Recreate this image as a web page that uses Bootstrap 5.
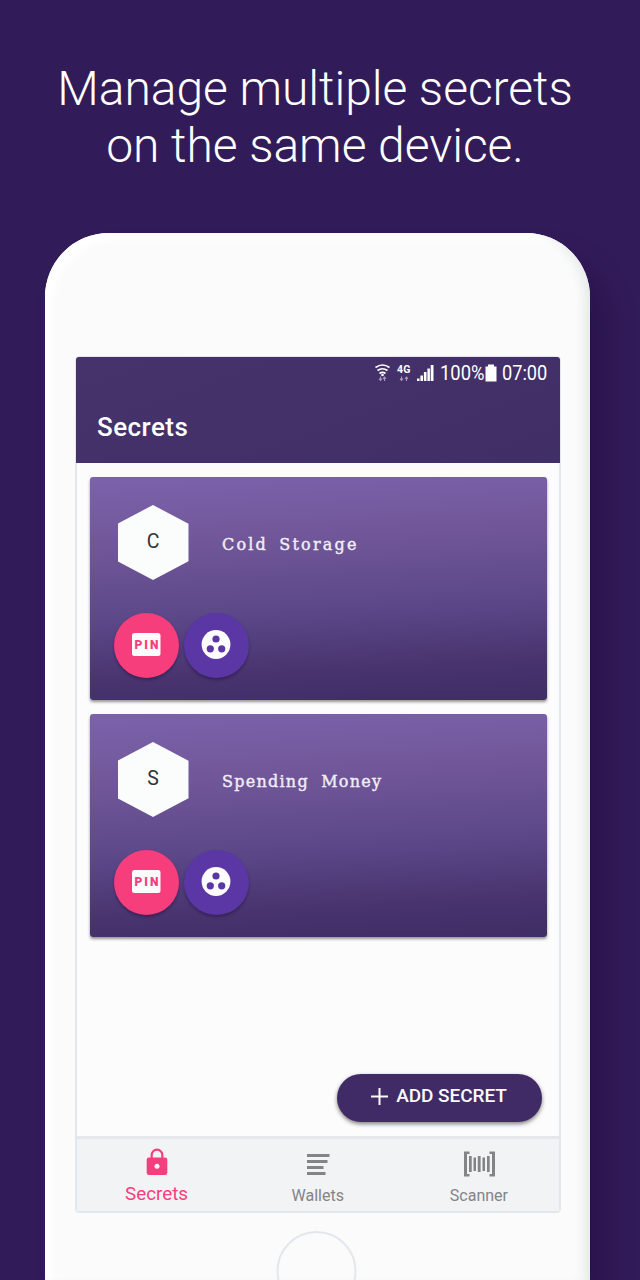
<!DOCTYPE html>
<html lang="en">
<head>
<meta charset="utf-8">
<meta name="viewport" content="width=device-width, initial-scale=1">
<title>Secrets</title>
<link href="https://cdn.jsdelivr.net/npm/bootstrap@5.3.0/dist/css/bootstrap.min.css" rel="stylesheet">
<style>
  body { background: #321b59; font-family: Roboto, "Noto Sans", sans-serif; height: 1280px; overflow: hidden; }
  .promo { height: 233px; padding: 60px 10px 0 0; font-size: 48px; font-weight: 300; line-height: 57px; letter-spacing: -.05px; }
  .phone { width: 545.5px; height: 1047px; overflow: hidden; margin-left: 44.5px; padding: 123px 29.5px 0 30.5px; border-radius: 64px 64px 0 0;
    background: #fbfbfb; box-shadow: inset -12px 0 12px -7px #e3e8e9, inset 8px 7px 10px #fff, 18px 24px 28px rgba(25,8,50,.3); }
  .screen { height: 857px; border: 1px solid #e2e7eb; border-radius: 4px; background: #fcfcfc; overflow: hidden; box-shadow: inset 0 0 0 1px #e2e7eb; }
  .app-header { height: 106px; background: linear-gradient(160deg, #47336b, #402e67); }
  .status-line { height: 31px; padding: 0 13px 0 0; font-size: 20px; line-height: 30px; }
  .status-line .pct { transform: scaleX(.92); transform-origin: left; width: 45px; margin-left: 4px; }
  .status-line .clock { transform: scaleX(.91); transform-origin: left; width: 45px; margin-left: 5px; }
  .app-title { font-size: 26px; font-weight: 500; line-height: 32px; letter-spacing: .45px; padding: 23px 0 0 21px; }
  .content { padding: 14px 13px 0 13.5px; height: 673px; }
  .secret { height: 223px; margin-bottom: 14px; border: 0; border-radius: 3px; padding: 28px 24px 0;
    background: linear-gradient(177deg, #7b61aa 2%, #715799 28%, #5b4787 60%, #48336e 84%, #402e66 98%);
    box-shadow: 0 2px 3px rgba(0,0,0,.42); }
  .hexagon { width: 71px; height: 75px; margin-left: 4px; padding-bottom: 1px; background: #fbfcfc; color: #333; font-size: 19.5px;
    clip-path: polygon(50% 0, 100% 25%, 100% 75%, 50% 100%, 0 75%, 0 25%); }
  .secret-name { font-family: "DejaVu Serif", serif; font-size: 16px; letter-spacing: 2.2px; word-spacing: 4px; color: #f2eef7;
    -webkit-text-stroke: .4px #f2eef7; margin: 4px 0 0 33.5px; }
  .secret-name.long { letter-spacing: 1.25px; word-spacing: 6px; }
  .discs { gap: 5px; margin-bottom: 22px; }
  .disc { width: 65px; height: 65px; box-shadow: 0 2px 3px rgba(25,10,50,.4); }
  .disc svg { margin-top: -1px; }
  .disc-pin { background: #f63e7d; }
  .disc-group { background: #5b36a5; }
  .add-secret { width: 205px; height: 48px; margin: -62px 18px 14px auto; border: 0; background: #402b66; color: #fafafa;
    font-size: 19px; font-weight: 500; letter-spacing: -.05px; box-shadow: 0 2px 4px rgba(0,0,0,.5); }
  .tabs { height: 76px; border-top: 2px solid #e5e7e9; background: #f2f3f5; color: #838485; font-size: 16px; box-shadow: inset 0 0 0 1px #e2e7eb; }
  .tabs a { color: inherit; line-height: 20px; }
  .tabs svg { margin: 9px 0 11px; }
  .tabs .chosen { color: #f63e7d; font-size: 18.8px; }
  .tabs .chosen svg { margin-bottom: 9px; }
  .home { width: 80px; height: 80px; margin: 18px auto 0; border: 2px solid #e3e7ec; transform: translateX(-1.5px); }
</style>
</head>
<body>
<h1 class="promo text-white text-center m-0">Manage multiple secrets<br>on the same device.</h1>
<main class="phone">
  <div class="screen d-flex flex-column">
    <header class="app-header text-white flex-shrink-0">
      <div class="status-line d-flex justify-content-end align-items-center">
        <svg width="66" height="24" viewBox="1.500 0 66 24" fill="none" aria-hidden="true">
          <g stroke="#fff" stroke-width="1.7">
            <path d="M7 6.500q7-5 14 0M9 9.500q5-3.500 10 0M11 12.500q3-2.200 6 0"/>
          </g>
          <circle cx="14" cy="14" r="1.300" fill="#fff"/>
          <g stroke="#a79bbd" stroke-width="1.1">
            <path d="M12 15.500v4M10.500 17.700l1.500 1.800 1.500-1.800M16 20v-4M14.500 17.800l1.500-1.800 1.500 1.800M33 15.500v4M31.500 17.700l1.500 1.800 1.500-1.800M38 20v-4M36.500 17.800l1.500-1.800 1.500 1.800"/>
          </g>
          <text x="28.500" y="12" font-size="10.500" font-weight="700" fill="#fff" textLength="13.500">4G</text>
          <path fill="#fff" d="M48.500 17.500H51V20h-2.500zM51.900 14.500h2.600V20h-2.600zM55.400 11H58v9h-2.600zM58.900 7.500h2.500V20h-2.500zM62.200 4H65v16h-2.800z"/>
        </svg>
        <span class="pct">100%</span>
        <svg width="12" height="18" viewBox="0 0 12 18" fill="#fff" aria-hidden="true"><path d="M3 .500h6v2h2.500v15H.500v-15H3z"/></svg>
        <span class="clock">07:00</span>
      </div>
      <div class="app-title">Secrets</div>
    </header>

    <section class="content flex-shrink-0">
      <article class="secret card">
        <div class="d-flex align-items-center">
          <div class="hexagon d-flex align-items-center justify-content-center">C</div>
          <div class="secret-name">Cold Storage</div>
        </div>
        <div class="discs d-flex mt-auto">
          <div class="disc disc-pin rounded-circle d-flex align-items-center justify-content-center">
            <svg width="30" height="24" viewBox="0 0 30 24"><rect x="1" width="28.500" height="23" rx="2.500" fill="#fcfafb"/><text x="3.400" y="15.600" font-size="12" font-weight="900" textLength="24" fill="#f63e7d">PIN</text></svg>
          </div>
          <div class="disc disc-group rounded-circle d-flex align-items-center justify-content-center">
            <svg width="30" height="30" viewBox="0 0 30 30"><circle cx="15" cy="14.500" r="14.400" fill="#fcfbfd"/><g fill="#5b36a5"><circle cx="15" cy="9" r="3.600"/><circle cx="9.300" cy="18.800" r="3.600"/><circle cx="20.700" cy="18.800" r="3.600"/></g></svg>
          </div>
        </div>
      </article>
      <article class="secret card">
        <div class="d-flex align-items-center">
          <div class="hexagon d-flex align-items-center justify-content-center">S</div>
          <div class="secret-name long">Spending Money</div>
        </div>
        <div class="discs d-flex mt-auto">
          <div class="disc disc-pin rounded-circle d-flex align-items-center justify-content-center">
            <svg width="30" height="24" viewBox="0 0 30 24"><rect x="1" width="28.500" height="23" rx="2.500" fill="#fcfafb"/><text x="3.400" y="15.600" font-size="12" font-weight="900" textLength="24" fill="#f63e7d">PIN</text></svg>
          </div>
          <div class="disc disc-group rounded-circle d-flex align-items-center justify-content-center">
            <svg width="30" height="30" viewBox="0 0 30 30"><circle cx="15" cy="14.500" r="14.400" fill="#fcfbfd"/><g fill="#5b36a5"><circle cx="15" cy="9" r="3.600"/><circle cx="9.300" cy="18.800" r="3.600"/><circle cx="20.700" cy="18.800" r="3.600"/></g></svg>
          </div>
        </div>
      </article>
    </section>

    <button class="add-secret btn rounded-pill d-flex align-items-center justify-content-center flex-shrink-0 p-0 pb-1">
      <svg class="me-2" width="17" height="17" viewBox="0 0 17 17" stroke="#fafafa" stroke-width="2"><path d="M8.500 0v17M0 8.500h17"/></svg>ADD SECRET
    </button>

    <nav class="tabs row g-0 text-center flex-shrink-0">
      <a href="#" class="chosen col text-decoration-none d-flex flex-column align-items-center">
        <svg width="22" height="28" viewBox="0 0 22 28"><path fill="none" stroke="#f63e7d" stroke-width="2.200" d="M5.700 12V8a5.300 5.300 0 0 1 10.600 0v4"/><rect x=".700" y="10.500" width="20.600" height="17.500" rx="2.200" fill="#f63e7d"/><circle cx="11" cy="19.300" r="2.500" fill="#f5f5f7"/></svg>
        Secrets
      </a>
      <a href="#" class="col text-decoration-none d-flex flex-column align-items-center">
        <svg width="24" height="28" viewBox="0 0 24 28" fill="#838485"><path d="M1 7h22.500v3H1zM1 13h20.500v3H1zM1 19h16.500v3H1zM1 25h18.500v3H1z"/></svg>
        Wallets
      </a>
      <a href="#" class="col text-decoration-none d-flex flex-column align-items-center">
        <svg width="32" height="28" viewBox="0 0 32 28" fill="#838485" overflow="visible"><path d="M1 4.500h5.500V7H4v20h2.500v2.500H1zM32 4.500h-5.500V7H29v20h-2.500v2.500H32z"/><path d="M6 9h2.700v16H6zM10.500 10.500H13v13.500h-2.500zM14.800 9h2.800v16h-2.800zM19.500 10.500H22v13.500h-2.500zM24 9h2.700v16H24z"/></svg>
        Scanner
      </a>
    </nav>
  </div>
  <div class="home rounded-circle"></div>
</main>
<script src="https://cdn.jsdelivr.net/npm/bootstrap@5.3.0/dist/js/bootstrap.bundle.min.js"></script>
</body>
</html>
